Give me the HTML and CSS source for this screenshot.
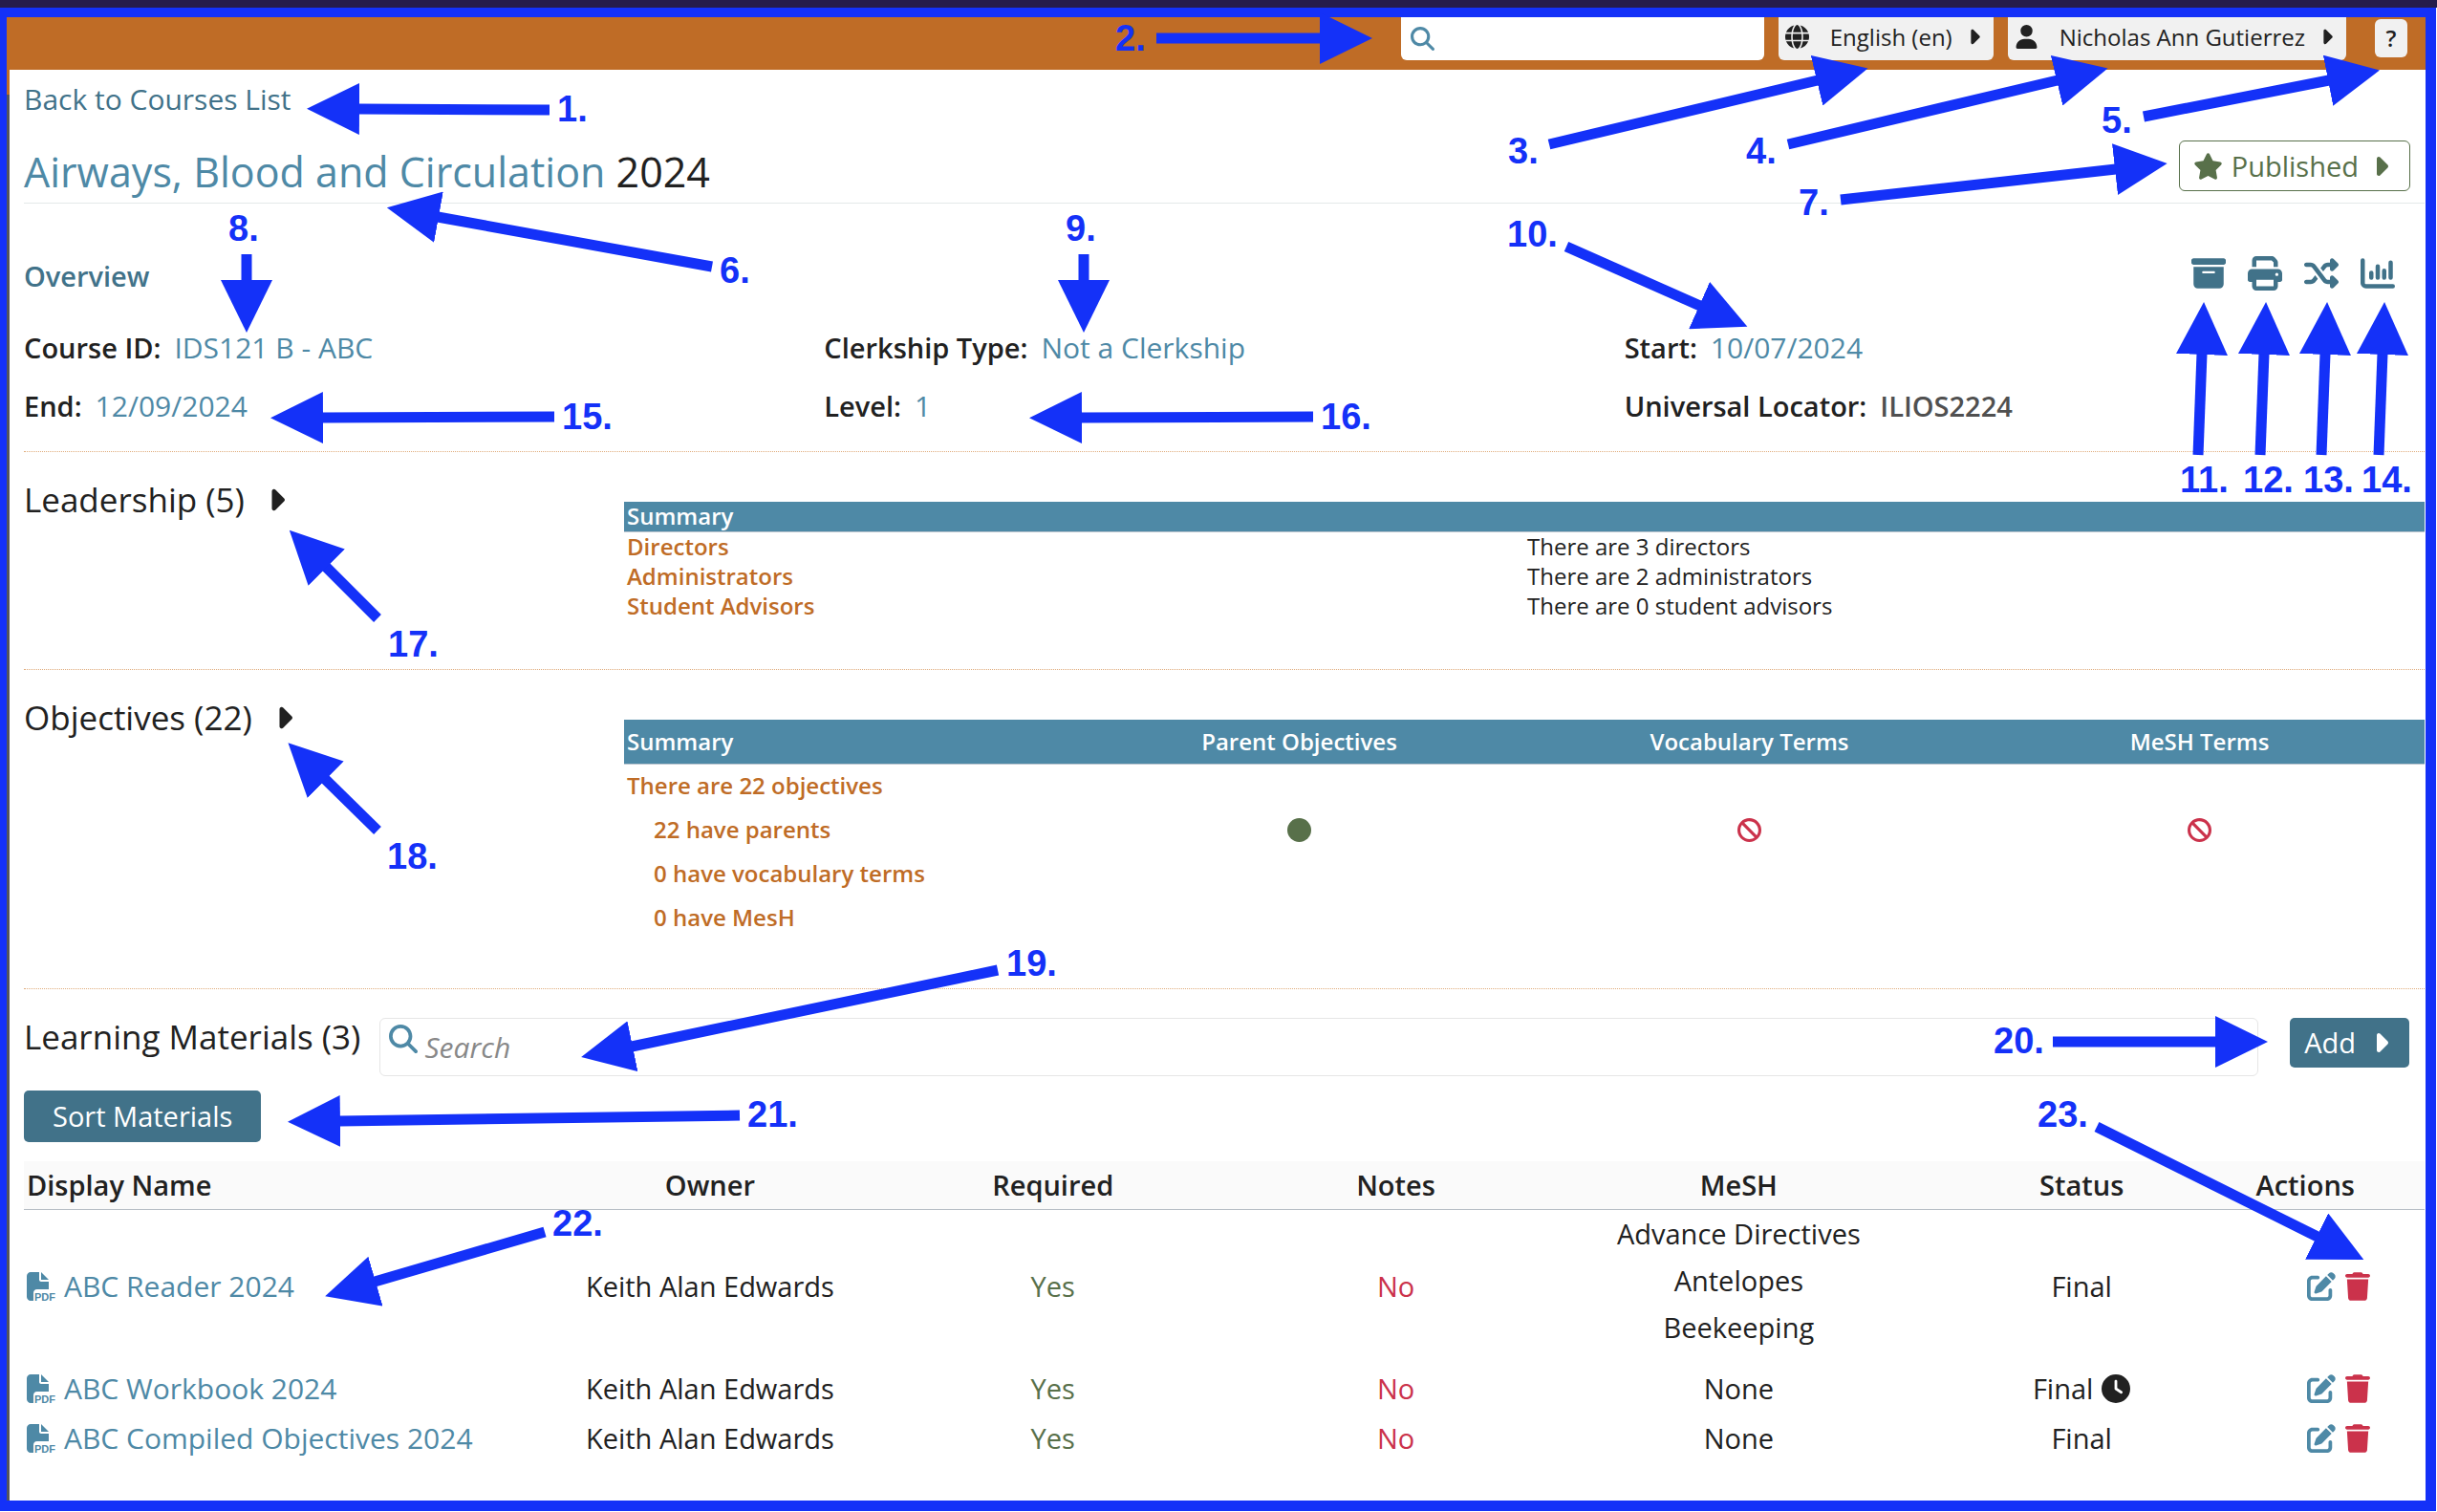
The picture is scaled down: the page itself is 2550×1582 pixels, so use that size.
FILE: index.html
```html
<!DOCTYPE html>
<html lang="en">
<head>
<meta charset="utf-8">
<title>Airways, Blood and Circulation</title>
<link rel="stylesheet" href="styles.css">
</head>
<body>
<svg class="defs" aria-hidden="true">
  <symbol id="i-search" viewBox="0 0 512 512"><path d="M416 208c0 45.9-14.9 88.3-40 122.7L502.6 457.4c12.5 12.5 12.5 32.8 0 45.3s-32.8 12.5-45.3 0L330.7 376c-34.4 25.2-76.8 40-122.7 40C93.1 416 0 322.9 0 208S93.1 0 208 0S416 93.1 416 208zM208 352a144 144 0 1 0 0-288 144 144 0 1 0 0 288z"/></symbol>
  <symbol id="i-globe" viewBox="0 0 512 512"><path d="M352 256c0 22.2-1.2 43.6-3.3 64H163.3c-2.2-20.4-3.3-41.8-3.3-64s1.2-43.6 3.3-64H348.7c2.2 20.4 3.3 41.8 3.3 64zm28.8-64H503.9c5.3 20.5 8.1 41.9 8.1 64s-2.8 43.5-8.1 64H380.8c2.1-20.6 3.2-42 3.2-64s-1.1-43.4-3.2-64zm112.6-32H376.7c-10-63.9-29.8-117.4-55.3-151.6c78.3 20.7 142 77.5 171.9 151.6zm-149.1 0H167.7c6.1-36.4 15.5-68.6 27-94.7c10.5-23.6 22.2-40.7 33.5-51.5C239.4 3.2 248.7 0 256 0s16.6 3.2 27.8 13.8c11.3 10.8 23 27.9 33.5 51.5c11.6 26 20.9 58.2 27 94.7zm-209 0H18.6C48.6 85.9 112.2 29.1 190.6 8.4C165.1 42.6 145.3 96.1 135.3 160zM8.1 192H131.2c-2.1 20.6-3.2 42-3.2 64s1.1 43.4 3.2 64H8.1C2.8 299.5 0 278.1 0 256s2.8-43.5 8.1-64zM194.7 446.6c-11.6-26-20.9-58.2-27-94.6H344.3c-6.1 36.4-15.5 68.6-27 94.6c-10.5 23.6-22.2 40.7-33.5 51.5C272.6 508.8 263.3 512 256 512s-16.6-3.2-27.8-13.8c-11.3-10.8-23-27.9-33.5-51.5zM135.3 352c10 63.9 29.8 117.4 55.3 151.6C112.2 482.9 48.6 426.1 18.6 352H135.3zm358.1 0c-30 74.1-93.6 130.9-171.9 151.6c25.5-34.2 45.2-87.7 55.3-151.6H493.4z"/></symbol>
  <symbol id="i-user" viewBox="0 0 448 512"><path d="M224 256A128 128 0 1 0 224 0a128 128 0 1 0 0 256zm-45.7 48C79.8 304 0 383.8 0 482.3C0 498.7 13.3 512 29.7 512H418.3c16.4 0 29.7-13.3 29.7-29.7C448 383.8 368.2 304 269.7 304H178.3z"/></symbol>
  <symbol id="i-caret" viewBox="0 0 256 512"><path d="M246.6 278.6c12.5-12.5 12.5-32.8 0-45.3l-128-128c-9.2-9.2-22.9-11.9-34.9-6.9s-19.8 16.6-19.8 29.6l0 256c0 12.9 7.8 24.6 19.8 29.6s25.7 2.2 34.9-6.9l128-128z"/></symbol>
  <symbol id="i-star" viewBox="0 0 576 512"><path d="M316.9 18C311.6 7 300.4 0 288.1 0s-23.4 7-28.8 18L195 150.3 51.4 171.5c-12 1.8-22 10.2-25.7 21.7s-.7 24.2 7.9 32.7L137.8 329 113.2 474.7c-2 12 3 24.2 12.9 31.3s23 8 33.8 2.3l128.3-68.5 128.3 68.5c10.8 5.7 23.9 4.9 33.8-2.3s14.9-19.3 12.9-31.3L438.5 329 542.7 225.9c8.6-8.5 11.7-21.2 7.9-32.7s-13.7-19.9-25.7-21.7L381.2 150.3 316.9 18z"/></symbol>
  <symbol id="i-archive" viewBox="0 0 512 512"><path d="M32 32H480c17.7 0 32 14.3 32 32V96c0 17.7-14.3 32-32 32H32C14.3 128 0 113.7 0 96V64C0 46.3 14.3 32 32 32zm0 128H480V416c0 35.3-28.7 64-64 64H96c-35.3 0-64-28.7-64-64V160zm128 80c0 8.8 7.2 16 16 16H336c8.8 0 16-7.2 16-16s-7.2-16-16-16H176c-8.8 0-16 7.2-16 16z"/></symbol>
  <symbol id="i-print" viewBox="0 0 512 512"><path d="M128 0C92.7 0 64 28.7 64 64v96h64V64H354.7L384 93.3V160h64V93.3c0-17-6.7-33.3-18.7-45.3L400 18.7C388 6.7 371.7 0 354.7 0H128zM384 352v32 64H128V384 368 352H384zm64 32h32c17.7 0 32-14.3 32-32V256c0-35.3-28.7-64-64-64H64c-35.3 0-64 28.7-64 64v96c0 17.7 14.3 32 32 32H64v64c0 35.3 28.7 64 64 64H384c35.3 0 64-28.7 64-64V384zM432 248a24 24 0 1 1 0 48 24 24 0 1 1 0-48z"/></symbol>
  <symbol id="i-shuffle" viewBox="0 0 512 512"><path d="M403.8 34.4c12-5 25.7-2.2 34.9 6.9l64 64c6 6 9.4 14.1 9.4 22.6s-3.4 16.6-9.4 22.6l-64 64c-9.2 9.2-22.9 11.9-34.9 6.9s-19.8-16.6-19.8-29.6V160H352c-10.1 0-19.6 4.7-25.6 12.8L284 229.3 244 176l31.2-41.6C293.3 110.2 321.8 96 352 96h32V64c0-12.9 7.8-24.6 19.8-29.6zM164 282.7L204 336l-31.2 41.6C154.7 401.8 126.2 416 96 416H32c-17.7 0-32-14.3-32-32s14.3-32 32-32H96c10.1 0 19.6-4.7 25.6-12.8L164 282.7zm274.6 188c-9.2 9.2-22.9 11.9-34.9 6.9s-19.8-16.6-19.8-29.6V416H352c-30.2 0-58.7-14.2-76.8-38.4L121.6 172.8c-6-8.1-15.5-12.8-25.6-12.8H32c-17.7 0-32-14.3-32-32s14.3-32 32-32H96c30.2 0 58.7 14.2 76.8 38.4L326.4 339.2c6 8.1 15.5 12.8 25.6 12.8h32V320c0-12.9 7.8-24.6 19.8-29.6s25.7-2.2 34.9 6.9l64 64c6 6 9.4 14.1 9.4 22.6s-3.4 16.6-9.4 22.6l-64 64z"/></symbol>
  <symbol id="i-chart" viewBox="0 0 512 512"><path fill="none" stroke="currentColor" stroke-width="64" stroke-linecap="round" d="M32 64V400a48 48 0 0 0 48 48H480M160 248V320M256 152V320M352 216V320M448 96V320"/></symbol>
  <symbol id="i-edit" viewBox="0 0 512 512"><path d="M471.6 21.7c-21.9-21.9-57.3-21.9-79.2 0L362.3 51.7l97.9 97.9 30.1-30.1c21.9-21.9 21.9-57.3 0-79.2L471.6 21.7zm-299.2 220c-6.1 6.1-10.8 13.6-13.5 21.9l-29.6 88.8c-2.9 8.6-.6 18.1 5.8 24.6s15.9 8.7 24.6 5.8l88.8-29.6c8.2-2.7 15.7-7.4 21.9-13.5L437.7 172.3 339.7 74.3 172.4 241.7zM96 64C43 64 0 107 0 160V416c0 53 43 96 96 96H352c53 0 96-43 96-96V320c0-17.7-14.3-32-32-32s-32 14.3-32 32v96c0 17.7-14.3 32-32 32H96c-17.7 0-32-14.3-32-32V160c0-17.7 14.3-32 32-32h96c17.7 0 32-14.3 32-32s-14.3-32-32-32H96z"/></symbol>
  <symbol id="i-trash" viewBox="0 0 448 512"><path d="M135.2 17.7L128 32H32C14.3 32 0 46.3 0 64S14.3 96 32 96H416c17.7 0 32-14.3 32-32s-14.3-32-32-32H320l-7.2-14.3C307.4 6.8 296.3 0 284.2 0H163.8c-12.1 0-23.2 6.8-28.6 17.7zM416 128H32L53.2 467c1.6 25.3 22.6 45 47.9 45H346.9c25.3 0 46.3-19.7 47.9-45L416 128z"/></symbol>
  <symbol id="i-clock" viewBox="0 0 512 512"><path d="M256 0a256 256 0 1 1 0 512A256 256 0 1 1 256 0zM232 120V256c0 8 4 15.5 10.7 20l96 64c11 7.4 25.9 4.4 33.3-6.7s4.4-25.9-6.7-33.3L280 243.2V120c0-13.3-10.7-24-24-24s-24 10.7-24 24z"/></symbol>
  <symbol id="i-ban" viewBox="0 0 512 512"><path d="M367.2 412.5L99.5 144.8C77.1 176.1 64 214.5 64 256c0 106 86 192 192 192c41.5 0 79.9-13.1 111.2-35.5zm45.3-45.3C434.9 335.9 448 297.5 448 256c0-106-86-192-192-192c-41.5 0-79.9 13.1-111.2 35.5L412.5 367.2zM0 256a256 256 0 1 1 512 0A256 256 0 1 1 0 256z"/></symbol>
  <symbol id="i-circle" viewBox="0 0 512 512"><circle cx="256" cy="256" r="256"/></symbol>
  <symbol id="i-pdf" viewBox="0 0 30 30"><path d="M0 4C0 2 2 0 4 0H13V8C13 9 14 10 15 10H23V18H11C8 18 7 20 7 22V30H4C2 30 0 28 0 26V4zM23 8H15V0L23 8z"/><text class="pdf-text" x="8" y="30">PDF</text></symbol>
</svg>

<div class="window-edge"></div>
<div class="frame">
  <header class="topbar">
    <label class="global-search"><svg class="icon s25"><use href="#i-search"/></svg><input type="search" aria-label="Search Ilios"></label>
    <button class="chip" type="button"><svg class="icon s25"><use href="#i-globe"/></svg><span>English (en)</span><svg class="icon c25"><use href="#i-caret"/></svg></button>
    <button class="chip" type="button"><svg class="icon s25"><use href="#i-user"/></svg><span>Nicholas Ann Gutierrez</span><svg class="icon c25"><use href="#i-caret"/></svg></button>
    <button class="help" type="button">?</button>
  </header>

  <main class="content">
    <a class="back" href="#courses">Back to Courses List</a>
    <div class="title-row">
      <h1><button class="title-edit" type="button">Airways, Blood and Circulation</button> 2024</h1>
      <button class="published" type="button"><svg class="icon star"><use href="#i-star"/></svg><span>Published</span><svg class="icon c32"><use href="#i-caret"/></svg></button>
    </div>

    <section class="overview">
      <div class="overview-head">
        <h2>Overview</h2>
        <nav class="tools" aria-label="Course tools">
          <a href="#materials" aria-label="Course materials"><svg class="icon s36"><use href="#i-archive"/></svg></a>
          <a href="#print" aria-label="Print"><svg class="icon s36"><use href="#i-print"/></svg></a>
          <a href="#rollover" aria-label="Rollover"><svg class="icon s36"><use href="#i-shuffle"/></svg></a>
          <a href="#visualize" aria-label="Visualizations"><svg class="icon s36"><use href="#i-chart"/></svg></a>
        </nav>
      </div>
      <dl class="facts">
        <div><dt>Course ID:</dt><dd><button type="button">IDS121 B - ABC</button></dd></div>
        <div><dt>Clerkship Type:</dt><dd><button type="button">Not a Clerkship</button></dd></div>
        <div><dt>Start:</dt><dd><button type="button">10/07/2024</button></dd></div>
        <div><dt>End:</dt><dd><button type="button">12/09/2024</button></dd></div>
        <div><dt>Level:</dt><dd><button type="button">1</button></dd></div>
        <div><dt>Universal Locator:</dt><dd class="locator">ILIOS2224</dd></div>
      </dl>
    </section>

    <section class="summary">
      <h2><button class="expand" type="button">Leadership (5)<svg class="icon c36"><use href="#i-caret"/></svg></button></h2>
      <table class="summary-table leadership">
        <thead><tr><th>Summary</th><th></th></tr></thead>
        <tbody>
          <tr><th>Directors</th><td>There are 3 directors</td></tr>
          <tr><th>Administrators</th><td>There are 2 administrators</td></tr>
          <tr><th>Student Advisors</th><td>There are 0 student advisors</td></tr>
        </tbody>
      </table>
    </section>

    <section class="summary">
      <h2><button class="expand" type="button">Objectives (22)<svg class="icon c36"><use href="#i-caret"/></svg></button></h2>
      <table class="summary-table objectives">
        <thead><tr><th>Summary</th><th>Parent Objectives</th><th>Vocabulary Terms</th><th>MeSH Terms</th></tr></thead>
        <tbody>
          <tr><th colspan="4">There are 22 objectives</th></tr>
          <tr><th class="sub">22 have parents</th><td class="yes"><svg class="icon s25"><use href="#i-circle"/></svg></td><td class="no"><svg class="icon s25"><use href="#i-ban"/></svg></td><td class="no"><svg class="icon s25"><use href="#i-ban"/></svg></td></tr>
          <tr><th class="sub" colspan="4">0 have vocabulary terms</th></tr>
          <tr><th class="sub" colspan="4">0 have MesH</th></tr>
        </tbody>
      </table>
    </section>

    <section class="materials">
      <div class="materials-head">
        <h2>Learning Materials (3)</h2>
        <label class="find"><svg class="icon s30"><use href="#i-search"/></svg><input type="search" placeholder="Search" aria-label="Search materials"></label>
        <button class="add" type="button">Add<svg class="icon c32"><use href="#i-caret"/></svg></button>
      </div>
      <button class="sort" type="button">Sort Materials</button>
      <table class="materials-table">
        <colgroup><col class="wide"><col><col><col><col><col><col class="narrow"></colgroup>
        <thead><tr><th class="left">Display Name</th><th>Owner</th><th>Required</th><th>Notes</th><th>MeSH</th><th>Status</th><th class="left">Actions</th></tr></thead>
        <tbody>
          <tr>
            <td class="left"><a class="file" href="#reader"><svg class="icon s30"><use href="#i-pdf"/></svg>ABC Reader 2024</a></td>
            <td>Keith Alan Edwards</td><td class="yes">Yes</td><td class="no">No</td>
            <td><ul class="terms"><li>Advance Directives</li><li>Antelopes</li><li>Beekeeping</li></ul></td>
            <td>Final</td>
            <td><div class="actions"><button class="edit" type="button" aria-label="Edit"><svg class="icon s30"><use href="#i-edit"/></svg></button><button class="no" type="button" aria-label="Remove"><svg class="icon trash"><use href="#i-trash"/></svg></button></div></td>
          </tr>
          <tr>
            <td class="left"><a class="file" href="#workbook"><svg class="icon s30"><use href="#i-pdf"/></svg>ABC Workbook 2024</a></td>
            <td>Keith Alan Edwards</td><td class="yes">Yes</td><td class="no">No</td><td>None</td>
            <td><span class="timed">Final<svg class="icon s30"><use href="#i-clock"/></svg></span></td>
            <td><div class="actions"><button class="edit" type="button" aria-label="Edit"><svg class="icon s30"><use href="#i-edit"/></svg></button><button class="no" type="button" aria-label="Remove"><svg class="icon trash"><use href="#i-trash"/></svg></button></div></td>
          </tr>
          <tr>
            <td class="left"><a class="file" href="#compiled"><svg class="icon s30"><use href="#i-pdf"/></svg>ABC Compiled Objectives 2024</a></td>
            <td>Keith Alan Edwards</td><td class="yes">Yes</td><td class="no">No</td><td>None</td><td>Final</td>
            <td><div class="actions"><button class="edit" type="button" aria-label="Edit"><svg class="icon s30"><use href="#i-edit"/></svg></button><button class="no" type="button" aria-label="Remove"><svg class="icon trash"><use href="#i-trash"/></svg></button></div></td>
          </tr>
        </tbody>
      </table>
    </section>
  </main>
</div>

<!-- Numbered callouts drawn over the page -->
<svg class="callouts" viewBox="0 0 2550 1582">
  <defs><marker id="head" markerUnits="userSpaceOnUse" markerWidth="55" markerHeight="54" refX="1" refY="27" orient="auto"><path d="M0 0L55 27L0 54z"/></marker></defs>
  <g class="arrows">
    <path d="M575 115L375 114"/>
    <path d="M1210 40H1382"/>
    <path d="M1621 151L1902 84"/>
    <path d="M1871 151L2153 84"/>
    <path d="M2243 122L2437 84"/>
    <path d="M745 279L458 227"/>
    <path d="M1926 209L2214 177"/>
    <path d="M258 266V294"/>
    <path d="M1134 266V294"/>
    <path d="M1639 258L1779 320"/>
    <path d="M2300 476L2304 370"/>
    <path d="M2365 476L2369 370"/>
    <path d="M2429 476L2433 370"/>
    <path d="M2489 476L2493 370"/>
    <path d="M580 436L337 437"/>
    <path d="M1374 436L1131 437"/>
    <path d="M395 647L341 593"/>
    <path d="M395 869L340 815"/>
    <path d="M1044 1015L661 1095"/>
    <path d="M2148 1090H2319"/>
    <path d="M774 1167L355 1173"/>
    <path d="M570 1289L392 1341"/>
    <path d="M2194 1179L2425 1294"/>
  </g>
  <g class="numbers">
    <text x="583" y="127">1.</text>
    <text x="1167" y="53">2.</text>
    <text x="1578" y="171">3.</text>
    <text x="1827" y="171">4.</text>
    <text x="2199" y="139">5.</text>
    <text x="753" y="296">6.</text>
    <text x="1882" y="225">7.</text>
    <text x="239" y="252">8.</text>
    <text x="1115" y="252">9.</text>
    <text x="1577" y="258">10.</text>
    <text x="2281" y="515">11.</text>
    <text x="2347" y="515">12.</text>
    <text x="2410" y="515">13.</text>
    <text x="2471" y="515">14.</text>
    <text x="588" y="449">15.</text>
    <text x="1382" y="449">16.</text>
    <text x="406" y="687">17.</text>
    <text x="405" y="909">18.</text>
    <text x="1053" y="1021">19.</text>
    <text x="2086" y="1102">20.</text>
    <text x="782" y="1179">21.</text>
    <text x="578" y="1293">22.</text>
    <text x="2132" y="1179">23.</text>
  </g>
</svg>
</body>
</html>
```
FILE: styles.css
```css
:root {
  --blue: #1431f8;
  --orange: #bf6c26;
  --teal: #4e89a6;
  --teal-dark: #417289;
  --green: #58704a;
  --red: #cb324b;
  --ink: #212121;
}
* { box-sizing: border-box; }
body {
  margin: 0;
  min-height: 100vh;
  display: flex;
  flex-direction: column;
  position: relative;
  padding: 0 1px 1px 0;
  background: #fff;
  color: var(--ink);
  font: 29px/40px "Open Sans", "Noto Sans", sans-serif;
}
button, input { font: inherit; color: inherit; }
button { padding: 0; border: 0; background: none; cursor: pointer; }
a { color: inherit; text-decoration: none; }
h1, h2, dl, dd, ul { margin: 0; padding: 0; }
.defs { position: absolute; width: 0; height: 0; }
.icon { display: block; flex: none; fill: currentColor; }
.s25 { width: 25px; height: 25px; }
.s30 { width: 30px; height: 30px; }
.s36 { width: 36px; height: 36px; }
.c25 { width: 13px; height: 25px; }
.c32 { width: 16px; height: 32px; }
.c36 { width: 18px; height: 36px; }
.star { width: 31px; height: 28px; }
.trash { width: 26px; height: 30px; }
.pdf-text { font: bold 11px "Liberation Sans", sans-serif; }

.window-edge { height: 8px; background: #261c4a; margin-right: -1px; }
.frame {
  flex: 1;
  display: flex;
  flex-direction: column;
  border: solid var(--blue);
  border-width: 10px 11px 11px 7px;
}

/* Top bar */
.topbar {
  display: flex;
  justify-content: flex-end;
  height: 55px;
  padding: 0 19px 10px 0;
  background: var(--orange);
  font-size: 24px;
  line-height: 32px;
}
.global-search, .chip { border-radius: 0 0 6px 6px; }
.global-search {
  display: flex;
  align-items: center;
  gap: 8px;
  width: 380px;
  padding: 0 10px;
  margin-right: 15px;
  background: #fff;
  color: var(--teal);
}
.global-search input, .find input { flex: 1; min-width: 0; border: 0; padding: 0; outline: 0; background: none; }
.chip {
  display: flex;
  align-items: center;
  gap: 16px;
  margin-right: 15px;
  padding: 0 14px 4px 7px;
  background: #f1f1f1;
}
.chip span { padding-left: 6px; }
.help {
  width: 34px;
  height: 40px;
  margin: 2px 0 0 15px;
  border-radius: 6px;
  background: #f1f1f1;
  font-weight: 600;
}

/* Page body */
.content {
  flex: 1;
  padding: 11px 1px 0 18px;
  background: linear-gradient(var(--orange) 26px, #55555a 26px) left / 3px 100% no-repeat, #fff;
}
.back { display: block; color: var(--teal-dark); font-size: 30px; font-weight: 500; }
.title-row {
  display: flex;
  justify-content: space-between;
  align-items: flex-end;
  margin-top: 23px;
  border-bottom: 1px solid #e3e9e9;
}
h1 { font-size: 43px; line-height: 65px; font-weight: 500; }
.title-edit { color: var(--teal); }
.published {
  display: flex;
  align-items: center;
  gap: 9px;
  height: 53px;
  margin: 0 15px 12px 0;
  padding: 0 22px 0 14px;
  border: 1px solid var(--green);
  border-radius: 6px;
  color: var(--green);
  font-weight: 500;
}
.published .c32 { margin-left: 6px; }

.overview { padding: 55px 0 17px; border-bottom: 1px dotted #e0ac7c; }
.overview-head { display: flex; justify-content: space-between; align-items: flex-start; }
.overview-head h2 { color: var(--teal-dark); font-size: 29px; line-height: 42px; font-weight: 600; }
.tools { display: flex; gap: 23px; padding-right: 31px; color: var(--teal-dark); }
.facts {
  display: grid;
  grid-template-columns: repeat(3, 1fr);
  margin-top: 23px;
  line-height: 61px;
}
.facts div { display: flex; gap: 14px; }
.facts dt { font-weight: 600; }
.facts button { color: var(--teal); font-size: 30px; }
.facts .locator { color: #505050; font-weight: 600; }

.summary {
  display: grid;
  grid-template-columns: 1fr 3fr;
  align-items: start;
  padding: 25px 0 51px;
  border-bottom: 1px dotted #e0ac7c;
}
.summary h2, .materials h2 { font-size: 35px; font-weight: 500; line-height: 50px; }
.expand { display: flex; align-items: center; gap: 24px; }
.summary-table {
  width: 100%;
  margin-top: 27px;
  border-collapse: collapse;
  table-layout: fixed;
  font-size: 24px;
  line-height: 30px;
}
.summary-table th, .summary-table td { padding: 0 3px; text-align: left; height: 31px; }
.summary-table thead th { background: var(--teal); color: #fff; font-weight: 600; border-bottom: 1px solid #bcc6cf; }
.summary-table tbody th { color: var(--orange); font-weight: 600; }
.summary-table.objectives th, .summary-table.objectives td { height: 46px; text-align: center; }
.summary-table.objectives th:first-child { text-align: left; }
.summary-table.objectives .sub { padding-left: 31px; }
.summary-table .icon { margin: 0 auto; }
.yes { color: var(--green); }
.no { color: var(--red); }

/* Learning materials */
.materials { padding-top: 30px; }
.materials-head { display: flex; align-items: flex-start; padding-right: 16px; }
.materials .materials-head h2 { line-height: 40px; }
.find {
  flex: 1;
  display: flex;
  gap: 7px;
  height: 61px;
  margin: 0 33px 0 20px;
  padding: 6px 9px 0;
  border: 1px solid #e6e6e6;
  border-radius: 6px;
}
.find .icon { color: var(--teal); }
.find input { height: 46px; font-size: 30px; }
.find input::placeholder { color: #888; font-style: italic; opacity: 1; }
.add, .sort { background: var(--teal-dark); color: #fff; border-radius: 5px; font-weight: 500; }
.add { display: flex; align-items: center; gap: 18px; height: 52px; padding: 0 22px 0 15px; }
.sort { display: block; height: 54px; margin-top: 15px; padding: 0 30px; }
.materials-table {
  width: 100%;
  margin-top: 20px;
  border-collapse: collapse;
  table-layout: fixed;
}
.materials-table col { width: 14.28%; }
.materials-table .wide { width: 21.43%; }
.materials-table .narrow { width: 7.14%; }
.materials-table th {
  height: 50px;
  padding: 0 3px;
  background: #fafafa;
  border-bottom: 1px solid #b8bfc6;
  font-weight: 600;
}
.materials-table td { height: 52px; padding: 0 3px; text-align: center; }
.materials-table .left { text-align: left; }
.file { display: flex; align-items: center; gap: 9px; color: var(--teal); font-size: 30px; }
.terms { list-style: none; line-height: 49px; padding-bottom: 14px; }
.timed { display: inline-flex; align-items: center; gap: 9px; }
.actions { display: flex; justify-content: center; gap: 10px; }
.edit { color: var(--teal); }

/* Callouts */
.callouts { position: absolute; top: 0; left: 0; width: 100%; height: auto; pointer-events: none; }
.arrows path { stroke: var(--blue); stroke-width: 11px; fill: none; marker-end: url(#head); }
#head path { stroke: none; fill: var(--blue); }
.numbers text { fill: var(--blue); font: bold 38px "Liberation Sans", Arial, sans-serif; }
```
